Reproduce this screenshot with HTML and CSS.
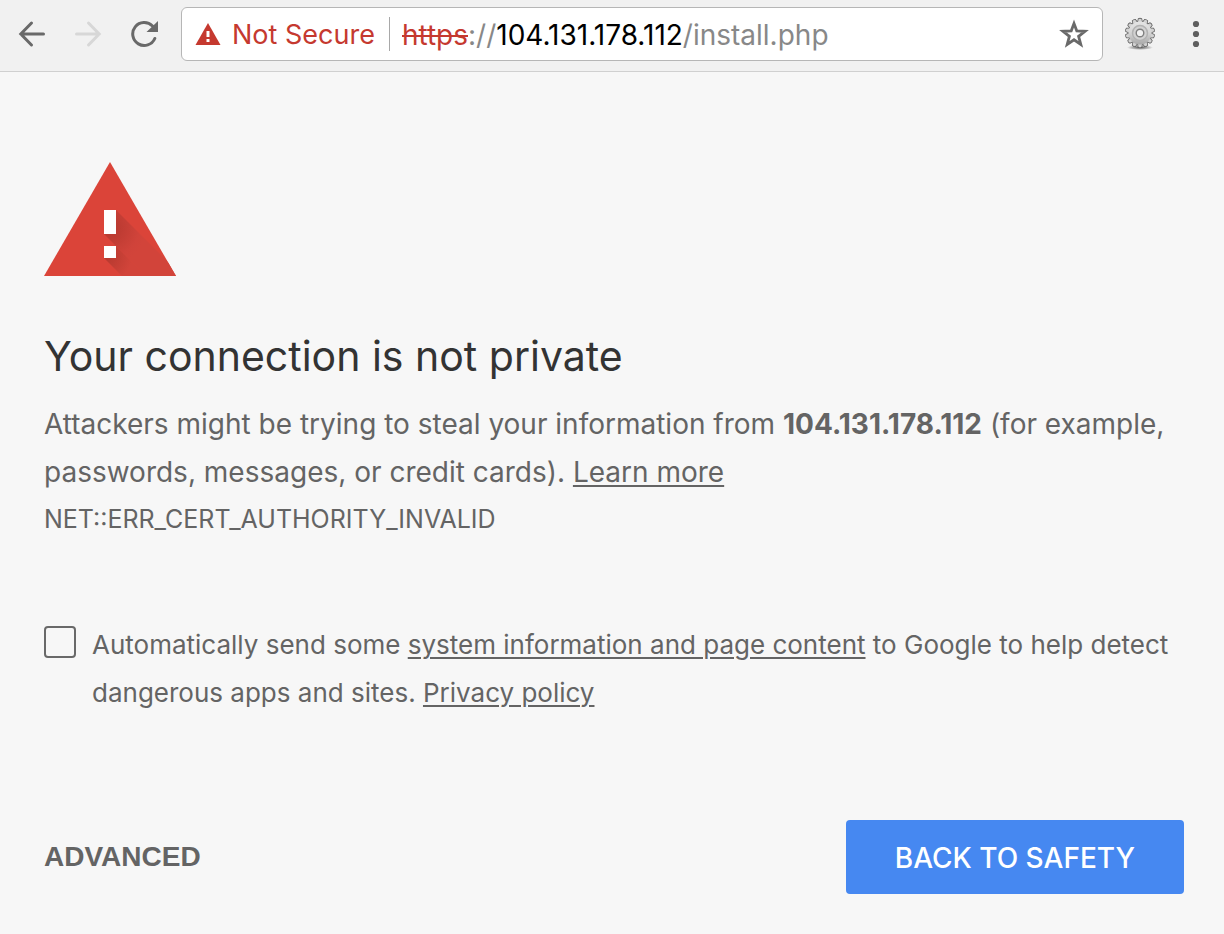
FILE: index.html
```html
<!DOCTYPE html>
<html lang="en">
<head>
<meta charset="utf-8">
<meta name="viewport" content="width=device-width, initial-scale=1">
<title>Privacy error</title>
<link rel="stylesheet" href="styles.css">
</head>
<body>
<header class="toolbar">
  <nav class="nav-buttons">
    <button class="icon-button" type="button" aria-label="Back">
      <svg width="28" height="28" viewBox="0 0 28 28" fill="none" stroke="#696969" stroke-width="3" stroke-linecap="round"><path d="M25.500 14H3M13.500 3L2.800 14L13.500 25"/></svg>
    </button>
    <button class="icon-button" type="button" aria-label="Forward" disabled>
      <svg width="28" height="28" viewBox="0 0 28 28" fill="none" stroke="#d7d7d7" stroke-width="3" stroke-linecap="round"><path d="M2.500 14H25M14.500 3L25.200 14L14.500 25"/></svg>
    </button>
    <button class="icon-button" type="button" aria-label="Reload">
      <svg width="28" height="28" viewBox="0 0 28 28"><path d="M22.500 6A11.500 11.500 0 1 0 24.800 18.500" fill="none" stroke="#696969" stroke-width="3" stroke-linecap="round"/><path d="M28 1V12H16.500Z" fill="#696969"/></svg>
    </button>
  </nav>
  <div class="omnibox">
    <button class="security" type="button">
      <svg width="26" height="22" viewBox="0 0 26 22"><path d="M13 0L25.500 22H.5Z" fill="#c5392f"/><path d="M11.500 8h3v6h-3zM11.500 16h3v3h-3z" fill="#fff"/></svg>
      <span>Not Secure</span>
    </button>
    <div class="url" role="textbox" aria-label="Address" contenteditable="true" spellcheck="false"><s class="scheme">https</s>://<span class="host">104.131.178.112</span>/install.php</div>
    <button class="icon-button" type="button" aria-label="Bookmark this page">
      <svg width="30" height="30" viewBox="0 0 30 30"><path d="M15 4.500L17.800 12L26 12.300L19.600 17.300L21.800 25.500L15 20.800L8.200 25.500L10.400 17.300L4 12.300L12.200 12Z" fill="none" stroke="#696969" stroke-width="2.800"/></svg>
    </button>
  </div>
  <button class="icon-button" type="button" aria-label="Extension">
    <svg width="32" height="34" viewBox="0 0 32 34">
      <defs>
        <linearGradient id="metal" x1="0" y1="0" x2="0" y2="32" gradientUnits="userSpaceOnUse"><stop offset="0" stop-color="#ececec"/><stop offset=".5" stop-color="#d4d4d4"/><stop offset="1" stop-color="#969696"/></linearGradient>
        <radialGradient id="ground"><stop offset="0" stop-color="#555"/><stop offset="1" stop-color="#555" stop-opacity="0"/></radialGradient>
        <path id="pair" d="M14 5L14.600 2Q16 1.300 17.400 2L18 5V27L17.400 30Q16 30.700 14.600 30L14 27Z"/>
        <g id="teeth">
          <use href="#pair"/><use href="#pair" transform="rotate(25.714 16 16)"/><use href="#pair" transform="rotate(51.429 16 16)"/><use href="#pair" transform="rotate(77.143 16 16)"/><use href="#pair" transform="rotate(102.857 16 16)"/><use href="#pair" transform="rotate(128.571 16 16)"/><use href="#pair" transform="rotate(154.286 16 16)"/>
        </g>
      </defs>
      <ellipse cx="16" cy="30.500" rx="13" ry="2.500" fill="url(#ground)"/>
      <use href="#teeth" fill="#606060" stroke="#606060" stroke-width="1.600"/>
      <circle cx="16" cy="16" r="12" fill="#606060"/>
      <use href="#teeth" fill="#d2d2d2"/>
      <circle cx="16" cy="16" r="11.500" fill="url(#metal)"/>
      <circle cx="16" cy="16" r="7.500" fill="#d2d2d2" stroke="#b2b2b2" stroke-width="1.500"/>
      <circle cx="16" cy="16" r="3.800" fill="#f1f1f1" stroke="#808080" stroke-width="1.400"/>
    </svg>
  </button>
  <button class="icon-button menu" type="button" aria-label="Menu">
    <svg width="8" height="28" viewBox="0 0 8 28" fill="#5f5f5f"><circle cx="4" cy="4" r="3.100"/><circle cx="4" cy="14" r="3.100"/><circle cx="4" cy="24" r="3.100"/></svg>
  </button>
</header>
<main class="warning">
  <svg class="warning-icon" width="132" height="114" viewBox="0 0 132 114">
    <defs>
      <radialGradient id="shade-bar" cx="66" cy="66" r="36" gradientUnits="userSpaceOnUse"><stop offset="0" stop-color="#b5392f"/><stop offset=".3" stop-color="#bf3c33"/><stop offset=".8" stop-color="#d0433a"/><stop offset="1" stop-color="#d2443a"/></radialGradient>
      <radialGradient id="shade-dot" cx="62" cy="94" r="26" gradientUnits="userSpaceOnUse"><stop offset="0" stop-color="#b5392f"/><stop offset=".4" stop-color="#c03d33"/><stop offset="1" stop-color="#d2443a"/></radialGradient>
      <clipPath id="sign"><path d="M66 0L132 114H0Z"/></clipPath>
    </defs>
    <path d="M66 0L132 114H0Z" fill="#db4439"/>
    <g clip-path="url(#sign)"><path d="M72 48L138 114H102L60 72Z" fill="url(#shade-bar)"/><path d="M72 84L102 114H78L60 96Z" fill="url(#shade-dot)"/></g>
    <path d="M60 48h12v24H60zM60 84h12v12H60z" fill="#fff"/>
  </svg>
  <h1 class="title">Your connection is not private</h1>
  <p class="message">Attackers might be trying to steal your information from <strong>104.131.178.112</strong> (for example, passwords, messages, or credit cards). <a href="#learn-more">Learn more</a></p>
  <p class="error-code">NET::ERR_CERT_AUTHORITY_INVALID</p>
  <div class="opt-in">
    <input class="checkbox" type="checkbox" id="report">
    <label for="report">Automatically send some <a href="#system-information">system information and page content</a> to Google to help detect dangerous apps and sites. <a href="#privacy">Privacy policy</a></label>
  </div>
  <div class="actions">
    <button class="advanced" type="button">ADVANCED</button>
    <button class="safety" type="button">BACK TO SAFETY</button>
  </div>
</main>
</body>
</html>
```
FILE: styles.css
```css
* { box-sizing: border-box; }

body {
  margin: 0;
  background: #f7f7f7;
  color: #646464;
  font-family: Inter, "Liberation Sans", sans-serif;
}

button {
  padding: 0;
  border: 0;
  background: none;
  font: inherit;
  color: inherit;
}

svg { display: block; }

.toolbar {
  display: flex;
  align-items: center;
  gap: 21px;
  height: 72px;
  padding: 0 24px 4px 18px;
  background: #f1f1f1;
  border-bottom: 1px solid #d0d0d0;
}

.nav-buttons {
  display: flex;
  gap: 28px;
}

.icon-button { flex: none; }

.menu { margin-left: 15px; }

.omnibox {
  flex: 1;
  display: flex;
  align-items: center;
  min-width: 0;
  height: 54px;
  margin-left: 2px;
  padding: 0 13px;
  background: #fff;
  border: 1px solid #b6b6b6;
  border-radius: 6px;
  line-height: 32px;
}

.security {
  display: flex;
  align-items: center;
  gap: 11px;
  padding-right: 14px;
  border-right: 1px solid #a8a8a8;
  color: #c5392f;
  font-size: 27px;
  white-space: nowrap;
}

.security span { padding-top: 2px; }

.url {
  flex: 1;
  min-width: 0;
  margin-left: 12px;
  padding-top: 2px;
  overflow: hidden;
  color: #888;
  font-size: 28px;
  white-space: nowrap;
}

.scheme { color: #c5392f; }
.host { color: #000; }

.warning { padding: 90px 40px 40px 44px; }

.title {
  margin: 52px 0 16px;
  color: #333;
  font-size: 41px;
  font-weight: 400;
  line-height: 56px;
}

.message {
  margin: 0;
  font-size: 28px;
  line-height: 48px;
}

a {
  color: inherit;
  text-decoration-thickness: 2px;
  text-underline-offset: 3px;
}

.error-code {
  margin: 0;
  font-size: 25px;
  line-height: 46px;
}

.opt-in {
  display: flex;
  align-items: flex-start;
  gap: 16px;
  margin-top: 79px;
  font-size: 26px;
  line-height: 48px;
}

.checkbox {
  flex: none;
  appearance: none;
  width: 32px;
  height: 32px;
  margin: 5px 0 0;
  border: 2px solid #696969;
  border-radius: 4px;
}

.actions {
  display: flex;
  align-items: center;
  justify-content: space-between;
  margin-top: 103px;
}

.advanced {
  font: bold 28px/32px "Liberation Sans", sans-serif;
}

.safety {
  padding: 21px 49px 19px;
  border-radius: 4px;
  background: #4688f1;
  color: #fff;
  font-size: 28px;
  font-weight: 500;
  line-height: 34px;
}
```
